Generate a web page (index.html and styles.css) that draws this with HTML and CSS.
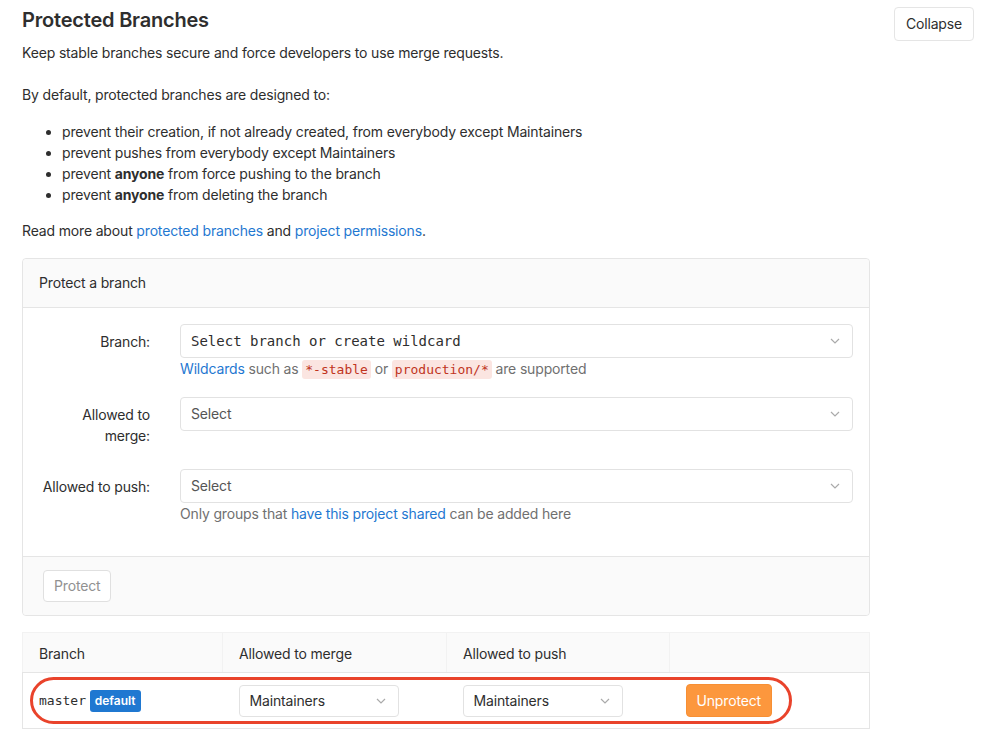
FILE: index.html
```html
<!DOCTYPE html>
<html lang="en">
<head>
<meta charset="utf-8">
<title>Protected Branches</title>
<link rel="stylesheet" href="styles.css">
</head>
<body>
<div class="page">
  <div class="section-header">
    <div class="content">
      <h4 class="title">Protected Branches</h4>
      <p class="intro">Keep stable branches secure and force developers to use merge requests.</p>
      <p class="lead">By default, protected branches are designed to:</p>
      <ul class="rules">
        <li>prevent their creation, if not already created, from everybody except Maintainers</li>
        <li>prevent pushes from everybody except Maintainers</li>
        <li>prevent <strong>anyone</strong> from force pushing to the branch</li>
        <li>prevent <strong>anyone</strong> from deleting the branch</li>
      </ul>
      <p class="more">Read more about <a href="#">protected branches</a> and <a href="#">project permissions</a>.</p>

      <div class="panel">
        <div class="panel-heading">Protect a branch</div>
        <div class="panel-body">
          <div class="form-group">
            <label class="label">Branch:</label>
            <div class="field">
              <div class="select mono-select"><span>Select branch or create wildcard</span><svg class="chev" viewBox="0 0 10 6" width="10" height="6"><path d="M1 1l4 4 4-4" fill="none" stroke="#aaa" stroke-width="1.2"/></svg></div>
              <div class="help"><a href="#">Wildcards</a> such as <code>*-stable</code> or <code>production/*</code> are supported</div>
            </div>
          </div>
          <div class="form-group">
            <label class="label">Allowed to merge:</label>
            <div class="field">
              <div class="select"><span class="ph">Select</span><svg class="chev" viewBox="0 0 10 6" width="10" height="6"><path d="M1 1l4 4 4-4" fill="none" stroke="#aaa" stroke-width="1.2"/></svg></div>
            </div>
          </div>
          <div class="form-group">
            <label class="label">Allowed to push:</label>
            <div class="field">
              <div class="select"><span class="ph">Select</span><svg class="chev" viewBox="0 0 10 6" width="10" height="6"><path d="M1 1l4 4 4-4" fill="none" stroke="#aaa" stroke-width="1.2"/></svg></div>
              <div class="help">Only groups that <a href="#">have this project shared</a> can be added here</div>
            </div>
          </div>
        </div>
        <div class="panel-footer">
          <button class="btn btn-disabled" disabled>Protect</button>
        </div>
      </div>

      <div class="table-wrap">
        <table class="table">
          <colgroup><col class="c1"><col class="c2"><col class="c3"><col class="c4"></colgroup>
          <thead>
            <tr><th>Branch</th><th>Allowed to merge</th><th>Allowed to push</th><th></th></tr>
          </thead>
          <tbody>
            <tr>
              <td><span class="ref">master</span> <span class="badge">default</span></td>
              <td><div class="select small"><span>Maintainers</span><svg class="chev" viewBox="0 0 10 6" width="10" height="6"><path d="M1 1l4 4 4-4" fill="none" stroke="#aaa" stroke-width="1.2"/></svg></div></td>
              <td><div class="select small"><span>Maintainers</span><svg class="chev" viewBox="0 0 10 6" width="10" height="6"><path d="M1 1l4 4 4-4" fill="none" stroke="#aaa" stroke-width="1.2"/></svg></div></td>
              <td><button class="btn btn-warning">Unprotect</button></td>
            </tr>
          </tbody>
        </table>
        <div class="highlight"></div>
      </div>
    </div>
    <button class="btn btn-default collapse">Collapse</button>
  </div>
</div>
</body>
</html>
```

FILE: styles.css
```css
* { box-sizing: border-box; }
html, body { margin: 0; padding: 0; background: #fff; }
body {
  font-family: Inter, "Noto Sans", "Liberation Sans", sans-serif;
  font-size: 14px;
  letter-spacing: -0.16px;
  color: #2e2e2e;
  line-height: 20px;
}
a { color: #1f78d1; text-decoration: none; }
.page { padding: 8px 17px 0 22px; }
.section-header { display: flex; justify-content: space-between; align-items: flex-start; }
.content { width: 848px; }
.title { margin: 0 0 11px; font-size: 20px; line-height: 24px; font-weight: 600; color: #2e2e2e; letter-spacing: -0.2px; }
.intro { margin: 0 0 22px; }
.lead { margin: 0 0 16px; }
.rules { margin: 0 0 16px; padding-left: 40px; }
.rules li { line-height: 21px; }
.rules strong { font-weight: 700; }
.more { margin: 0 0 17px; }

.btn {
  font-family: inherit;
  font-size: 14px;
  letter-spacing: -0.16px;
  line-height: 20px;
  border-radius: 4px;
  border: 1px solid #e5e5e5;
  background: #fff;
  color: #2e2e2e;
  padding: 6px 10px;
}
.collapse { margin-top: -1px; padding: 6px 11px; height: 34px; }

.panel { border: 1px solid #e5e5e5; border-radius: 4px; margin-bottom: 16px; }
.panel-heading {
  background: #fafafa;
  border-bottom: 1px solid #e5e5e5;
  padding: 14px 16px;
  border-radius: 4px 4px 0 0;
}
.panel-body { padding: 16px 16px 31px; }
.form-group { display: flex; margin-bottom: 16px; }
.form-group:last-child { margin-bottom: 0; }
.label { width: 141px; padding: 7px 30px 7px 0; text-align: right; line-height: 21px; flex: none; }
.field { flex: 1; }
.select {
  height: 34px;
  border: 1px solid #e2e2e2;
  border-radius: 4px;
  background: #fff;
  display: flex;
  align-items: center;
  justify-content: space-between;
  padding: 0 10px;
}
.chev { flex: none; margin-right: 2px; }
.mono-select span { font-family: "DejaVu Sans Mono", monospace; font-size: 14px; color: #2e2e2e; letter-spacing: 0; }
.ph { color: #555; }
.help { color: #707070; margin-top: 0; line-height: 22px; }
code {
  font-family: "DejaVu Sans Mono", monospace;
  font-size: 13px;
  letter-spacing: 0;
  color: #c0341d;
  background: #fbe5e1;
  border-radius: 3px;
  padding: 2px 3px;
}
.panel-footer {
  background: #fafafa;
  border-top: 1px solid #e5e5e5;
  padding: 13px 20px;
  border-radius: 0 0 4px 4px;
}
.btn-disabled { color: #919191; border-color: #e0e0e0; height: 32px; padding: 5px 10px; }

.table-wrap { position: relative; }
.table { width: 100%; border-collapse: collapse; table-layout: fixed; border: 1px solid #e5e5e5; }
.c1 { width: 200px; } .c2 { width: 224px; } .c3 { width: 223px; }
.table th {
  background: #fafafa;
  font-weight: 400;
  text-align: left;
  padding: 11px 16px 8px;
  border: 1px solid #f2f2f2;
  border-bottom: 1px solid #e5e5e5;
  line-height: 20px;
}
.table td { padding: 11px 16px; vertical-align: middle; height: 54px; }
.ref { font-family: "DejaVu Sans Mono", monospace; font-size: 13px; letter-spacing: 0; }
.badge {
  display: inline-block;
  background: #1f78d1;
  color: #fff;
  font-size: 12px;
  font-weight: 600;
  line-height: 16px;
  padding: 3px 5px;
  border-radius: 3px;
  letter-spacing: 0;
}
.select.small { height: 32px; width: 160px; }
.btn-warning {
  background: #fc973d;
  border-color: #f78f34;
  color: #fff;
  padding: 6px 10px;
  height: 33px;
}
.highlight {
  position: absolute;
  left: 8px;
  top: 45px;
  width: 762px;
  height: 47px;
  border: 3px solid #e9432b;
  border-radius: 24px;
  pointer-events: none;
}
```
